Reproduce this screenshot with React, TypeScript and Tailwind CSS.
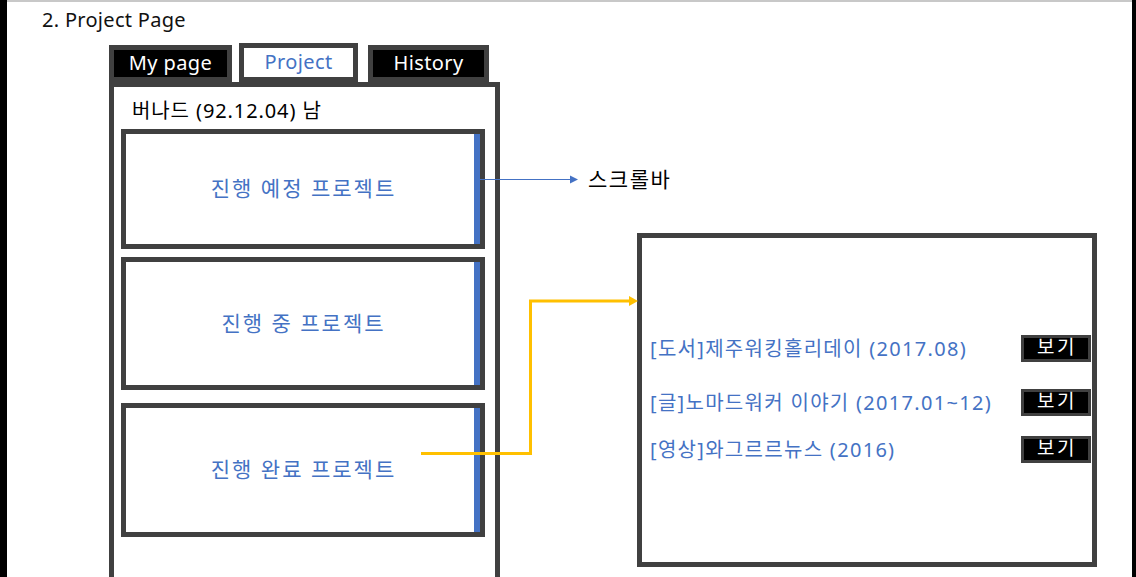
import React from 'react';

const FONT = { fontFamily: '"Noto Sans", "Noto Sans CJK KR", sans-serif' };

const CARDS = [
  { label: '진행 예정 프로젝트', h: 'h-[120px]', mt: 'mt-[6px]' },
  { label: '진행 중 프로젝트', h: 'h-[133px]', mt: 'mt-[8px]' },
  { label: '진행 완료 프로젝트', h: 'h-[134px]', mt: 'mt-[13px]' },
];

const ITEMS = [
  { title: '[도서]제주워킹홀리데이 (2017.08)', mt: 'mt-0' },
  { title: '[글]노마드워커 이야기 (2017.01~12)', mt: 'mt-[27px]' },
  { title: '[영상]와그르르뉴스 (2016)', mt: 'mt-[20px]' },
];

function Tab({ label, active }: { label: string; active?: boolean }) {
  return (
    <div
      className={
        'flex items-center justify-center border-[5px] border-[#404040] text-[20px] leading-none tracking-[0.4px] ' +
        (active ? 'h-[39px] bg-white text-[#4472c4]' : 'h-[37px] bg-black text-white')
      }
    >
      <span className="-mt-[2px]">{label}</span>
    </div>
  );
}

export default function App() {
  return (
    <div className="relative flex h-[577px] w-[1136px] overflow-hidden bg-white" style={FONT}>
      <div className="w-[7px] shrink-0 bg-black" />
      <div className="flex-1 border-t-2 border-[#c8c8c8]">
        <div className="pl-[35px] pt-[6px] text-[20px] leading-[24px] tracking-[0.3px] text-[#111]">2. Project Page</div>

        <div className="mt-[11px] flex items-start">
          {/* left mock: tabs + profile panel */}
          <div className="ml-[102px] w-[391px]">
            <div className="flex items-end">
              <div className="w-[123px]"><Tab label="My page" /></div>
              <div className="ml-[7px] w-[119px]"><Tab label="Project" active /></div>
              <div className="ml-[10px] w-[121px]"><Tab label="History" /></div>
            </div>
            <div className="h-[520px] border-[5px] border-[#404040] px-[7px]">
              <div className="pl-[11px] pt-[12px] text-[20px] leading-[24px] tracking-[0.9px] text-black">버나드 (92.12.04) 남</div>
              {CARDS.map((c) => (
                <div key={c.label} className={`${c.h} ${c.mt} flex w-[364px] border-[5px] border-[#404040]`}>
                  <div className="flex flex-1 items-center justify-center pl-[7px] text-[21px] tracking-[2px] text-[#4472c4]">
                    {c.label}
                  </div>
                  <div className="w-[6px] bg-[#4472c4]" />
                </div>
              ))}
            </div>
          </div>

          {/* right mock: project list */}
          <div className="ml-[137px] mt-[190px] h-[334px] w-[460px] border-[5px] border-[#404040] pl-[8px] pt-[97px]">
            {ITEMS.map((it) => (
              <div key={it.title} className={`${it.mt} flex items-center justify-between`}>
                <span className="text-[20px] leading-[24px] tracking-[1.3px] text-[#4472c4]">{it.title}</span>
                <div className="mr-[1px] flex h-[27px] w-[70px] items-center justify-center border-[3px] border-[#404040] bg-black text-[19px] leading-none tracking-[2.5px] text-white">
                  <span className="-mt-[2px] pl-[2px]">보기</span>
                </div>
              </div>
            ))}
          </div>
        </div>
      </div>
      <div className="w-[4px] shrink-0 bg-black" />

      {/* annotation arrows */}
      <svg className="pointer-events-none absolute left-0 top-0" width="1136" height="577">
        <line x1="476" y1="179.5" x2="571" y2="179.5" stroke="#4472c4" strokeWidth="1.2" />
        <polygon points="570,175.5 578,179.5 570,183.5" fill="#4472c4" />
        <polyline
          points="421,453.5 530.5,453.5 530.5,301 630,301"
          fill="none"
          stroke="#ffc000"
          strokeWidth="3"
        />
        <polygon points="629,296 638,301 629,306" fill="#ffc000" />
      </svg>
      <div className="absolute left-[588px] top-[165px] text-[21px] leading-[28px] tracking-[1.5px] text-black">스크롤바</div>
    </div>
  );
}
